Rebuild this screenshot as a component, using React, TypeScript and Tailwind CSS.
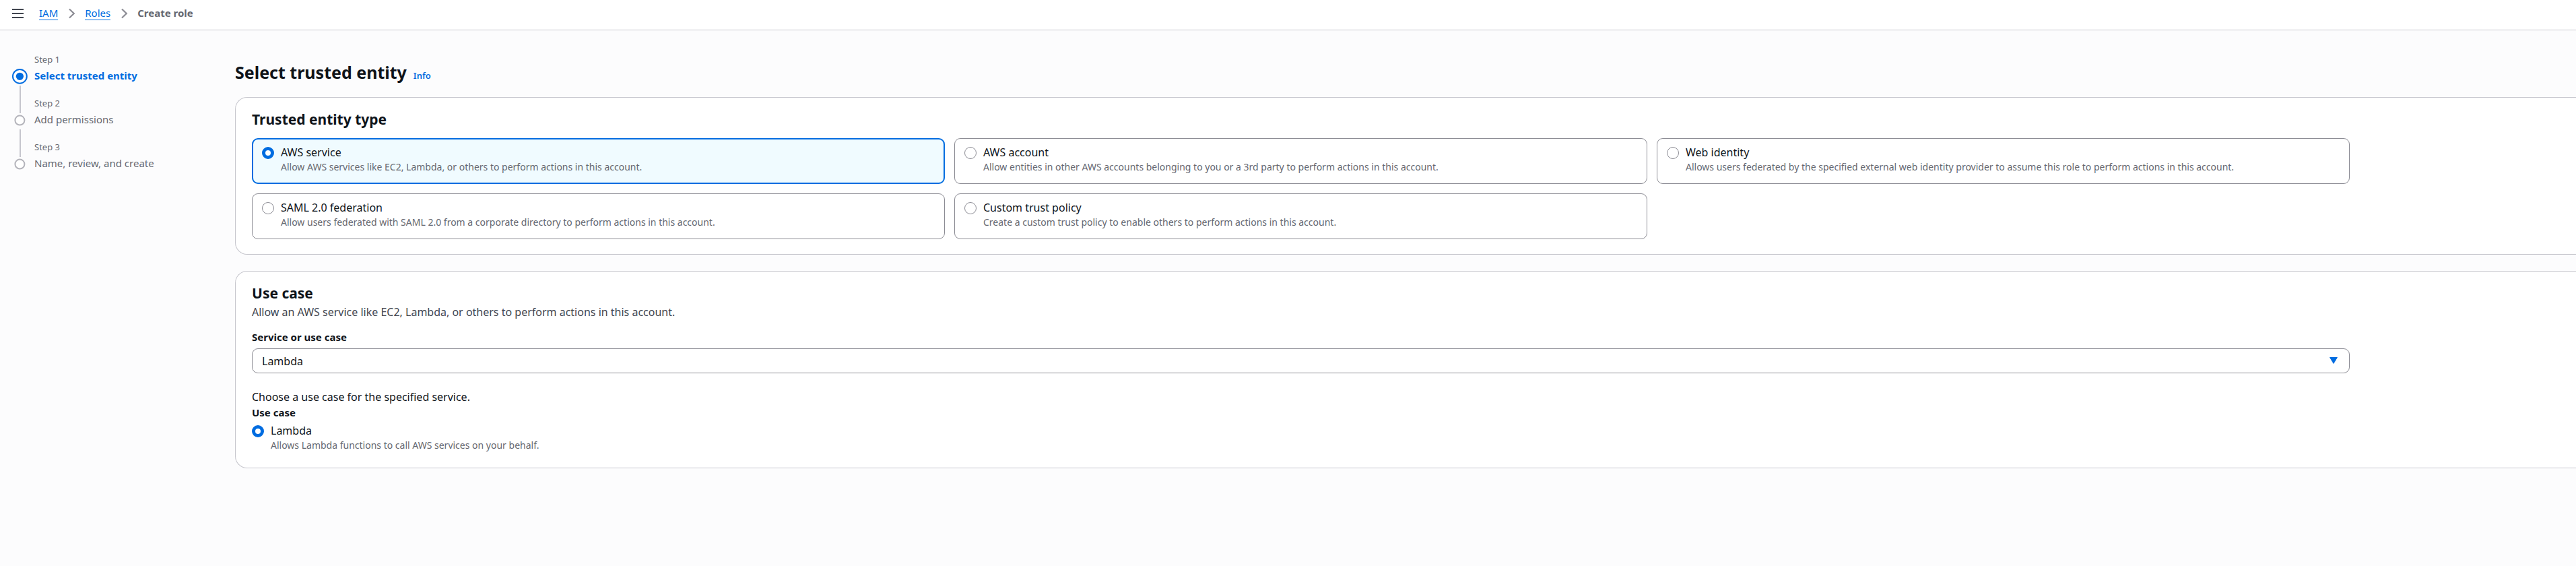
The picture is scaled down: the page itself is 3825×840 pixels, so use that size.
import React, { useState } from 'react';

type Entity = { id: string; label: string; description: string };

const entities: Entity[] = [
  { id: 'service', label: 'AWS service', description: 'Allow AWS services like EC2, Lambda, or others to perform actions in this account.' },
  { id: 'account', label: 'AWS account', description: 'Allow entities in other AWS accounts belonging to you or a 3rd party to perform actions in this account.' },
  { id: 'web', label: 'Web identity', description: 'Allows users federated by the specified external web identity provider to assume this role to perform actions in this account.' },
  { id: 'saml', label: 'SAML 2.0 federation', description: 'Allow users federated with SAML 2.0 from a corporate directory to perform actions in this account.' },
  { id: 'custom', label: 'Custom trust policy', description: 'Create a custom trust policy to enable others to perform actions in this account.' },
];

const steps = ['Select trusted entity', 'Add permissions', 'Name, review, and create'];

const radioClass =
  'mt-[3px] size-[18px] shrink-0 appearance-none rounded-full border border-[#8c8c94] bg-white checked:border-[5px] checked:border-[#006ce0]';

function Chevron() {
  return (
    <svg className="size-4" viewBox="0 0 16 16" fill="none" stroke="#8c8c94" strokeWidth="2.2" aria-hidden="true">
      <path d="M5 1.5 11.8 8 5 14.5" />
    </svg>
  );
}

function Header() {
  return (
    <header className="flex h-[45px] items-center border-b border-[#c6c6cd] bg-white pb-1 pl-[18px]">
      <button type="button" aria-label="Open navigation" className="flex w-[17px] flex-col gap-1">
        <span className="h-0.5 bg-[#424650]" />
        <span className="h-0.5 bg-[#424650]" />
        <span className="h-0.5 bg-[#424650]" />
      </button>
      <nav aria-label="Breadcrumbs" className="ml-[23px]">
        <ol className="flex items-center gap-3 text-[15px] leading-[19px] text-[#006ce0]">
          <li><a href="#iam" className="block border-b border-[#006ce0]">IAM</a></li>
          <li><Chevron /></li>
          <li><a href="#roles" className="block border-b border-[#006ce0]">Roles</a></li>
          <li><Chevron /></li>
          <li className="pb-px font-bold text-[#656871]" aria-current="page">Create role</li>
        </ol>
      </nav>
    </header>
  );
}

function StepMarker({ active }: { active: boolean }) {
  if (active) {
    return (
      <svg className="size-6" viewBox="0 0 24 24" aria-hidden="true">
        <circle cx="12.4" cy="12.3" r="10.4" fill="#fff" stroke="#006ce0" strokeWidth="2" />
        <circle cx="12.4" cy="12.3" r="5.6" fill="#006ce0" />
      </svg>
    );
  }
  return (
    <svg className="size-6" viewBox="0 0 24 24" aria-hidden="true">
      <circle cx="12.4" cy="12.6" r="7" fill="#fff" stroke="#b4b4bb" strokeWidth="2" />
    </svg>
  );
}

function Steps() {
  return (
    <nav aria-label="Steps" className="w-[349px] shrink-0 pt-8 pl-[17px]">
      <ol>
        {steps.map((step, i) => (
          <li key={step} className="relative h-[65px] pl-[34px]">
            <p className="pt-px text-[13px] leading-[20px] text-[#656871]">Step {i + 1}</p>
            <p className={i === 0 ? 'text-[15px] leading-[28px] font-bold text-[#006ce0]' : 'text-[15px] leading-[28px] text-[#656871]'}>{step}</p>
            <span className="absolute top-6 left-0"><StepMarker active={i === 0} /></span>
            {i < steps.length - 1 && <span className="absolute top-[50px] left-3 h-[41px] w-0.5 bg-[#c6c6cd]" />}
          </li>
        ))}
      </ol>
    </nav>
  );
}

function Tile({ entity, selected, onSelect }: { entity: Entity; selected: boolean; onSelect: () => void }) {
  return (
    <label
      className={
        selected
          ? 'flex gap-[10px] rounded-[9px] border-2 border-[#006ce0] bg-[#f0fbff] px-[13px] py-2'
          : 'flex gap-[10px] rounded-[9px] border border-[#8c8c94] bg-white px-[14px] py-[9px]'
      }
    >
      <input type="radio" name="entity" className={radioClass} checked={selected} onChange={onSelect} />
      <span className="min-w-0">
        <span className="block text-base leading-[23px] text-[#0f141a]">{entity.label}</span>
        <span className="block pb-[5px] text-sm leading-[20px] text-[#656871]">{entity.description}</span>
      </span>
    </label>
  );
}

const panelClass = 'rounded-l-[18px] border border-r-0 border-[#c6c6cd] bg-white pt-[18px] pr-[336px] pl-6';

export default function App() {
  const [entity, setEntity] = useState('service');
  return (
    <div className="min-h-screen bg-[#fcfcfd] font-['Noto_Sans',sans-serif] text-[#0f141a]">
      <Header />
      <div className="flex">
        <Steps />
        <main className="min-w-0 flex-1 pt-[46px]">
          <div className="flex items-baseline gap-[10px]">
            <h1 className="text-[25px] leading-[32px] font-bold">Select trusted entity</h1>
            <a href="#info" className="text-[13px] leading-[20px] font-semibold text-[#006ce0]">Info</a>
          </div>

          <section className={`${panelClass} mt-[21px] pb-[22px]`}>
            <h2 className="text-[21px] leading-[28px] font-bold">Trusted entity type</h2>
            <div className="mt-[14px] grid grid-cols-3 gap-[14px]">
              {entities.map((e) => (
                <Tile key={e.id} entity={e} selected={entity === e.id} onSelect={() => setEntity(e.id)} />
              ))}
            </div>
          </section>

          <section className={`${panelClass} mt-6 pb-[23px]`}>
            <h2 className="text-[21px] leading-[28px] font-bold">Use case</h2>
            <p className="text-base leading-[28px] text-[#424650]">
              Allow an AWS service like EC2, Lambda, or others to perform actions in this account.
            </p>
            <label htmlFor="service" className="mt-3 block text-[15px] leading-[22px] font-bold">Service or use case</label>
            <div className="relative mt-[6px]">
              <select id="service" defaultValue="Lambda" className="block h-[37px] w-full appearance-none rounded-[9px] border border-[#8c8c94] bg-white px-[14px] text-base">
                <option>Lambda</option>
              </select>
              <svg className="pointer-events-none absolute top-3 right-[18px] h-3 w-3" viewBox="0 0 12 12" aria-hidden="true">
                <path d="M.6 1.5H11.4L6 10.4Z" fill="#006ce0" stroke="#006ce0" strokeLinejoin="round" />
              </svg>
            </div>
            <p className="mt-[23px] text-base leading-[24px]">Choose a use case for the specified service.</p>
            <fieldset>
              <legend className="text-[15px] leading-[22px] font-bold">Use case</legend>
              <label className="mt-[5px] flex gap-[10px]">
                <input type="radio" name="usecase" defaultChecked className={radioClass} />
                <span>
                  <span className="block text-base leading-[23px]">Lambda</span>
                  <span className="block text-sm leading-[20px] text-[#656871]">Allows Lambda functions to call AWS services on your behalf.</span>
                </span>
              </label>
            </fieldset>
          </section>
        </main>
      </div>
    </div>
  );
}
